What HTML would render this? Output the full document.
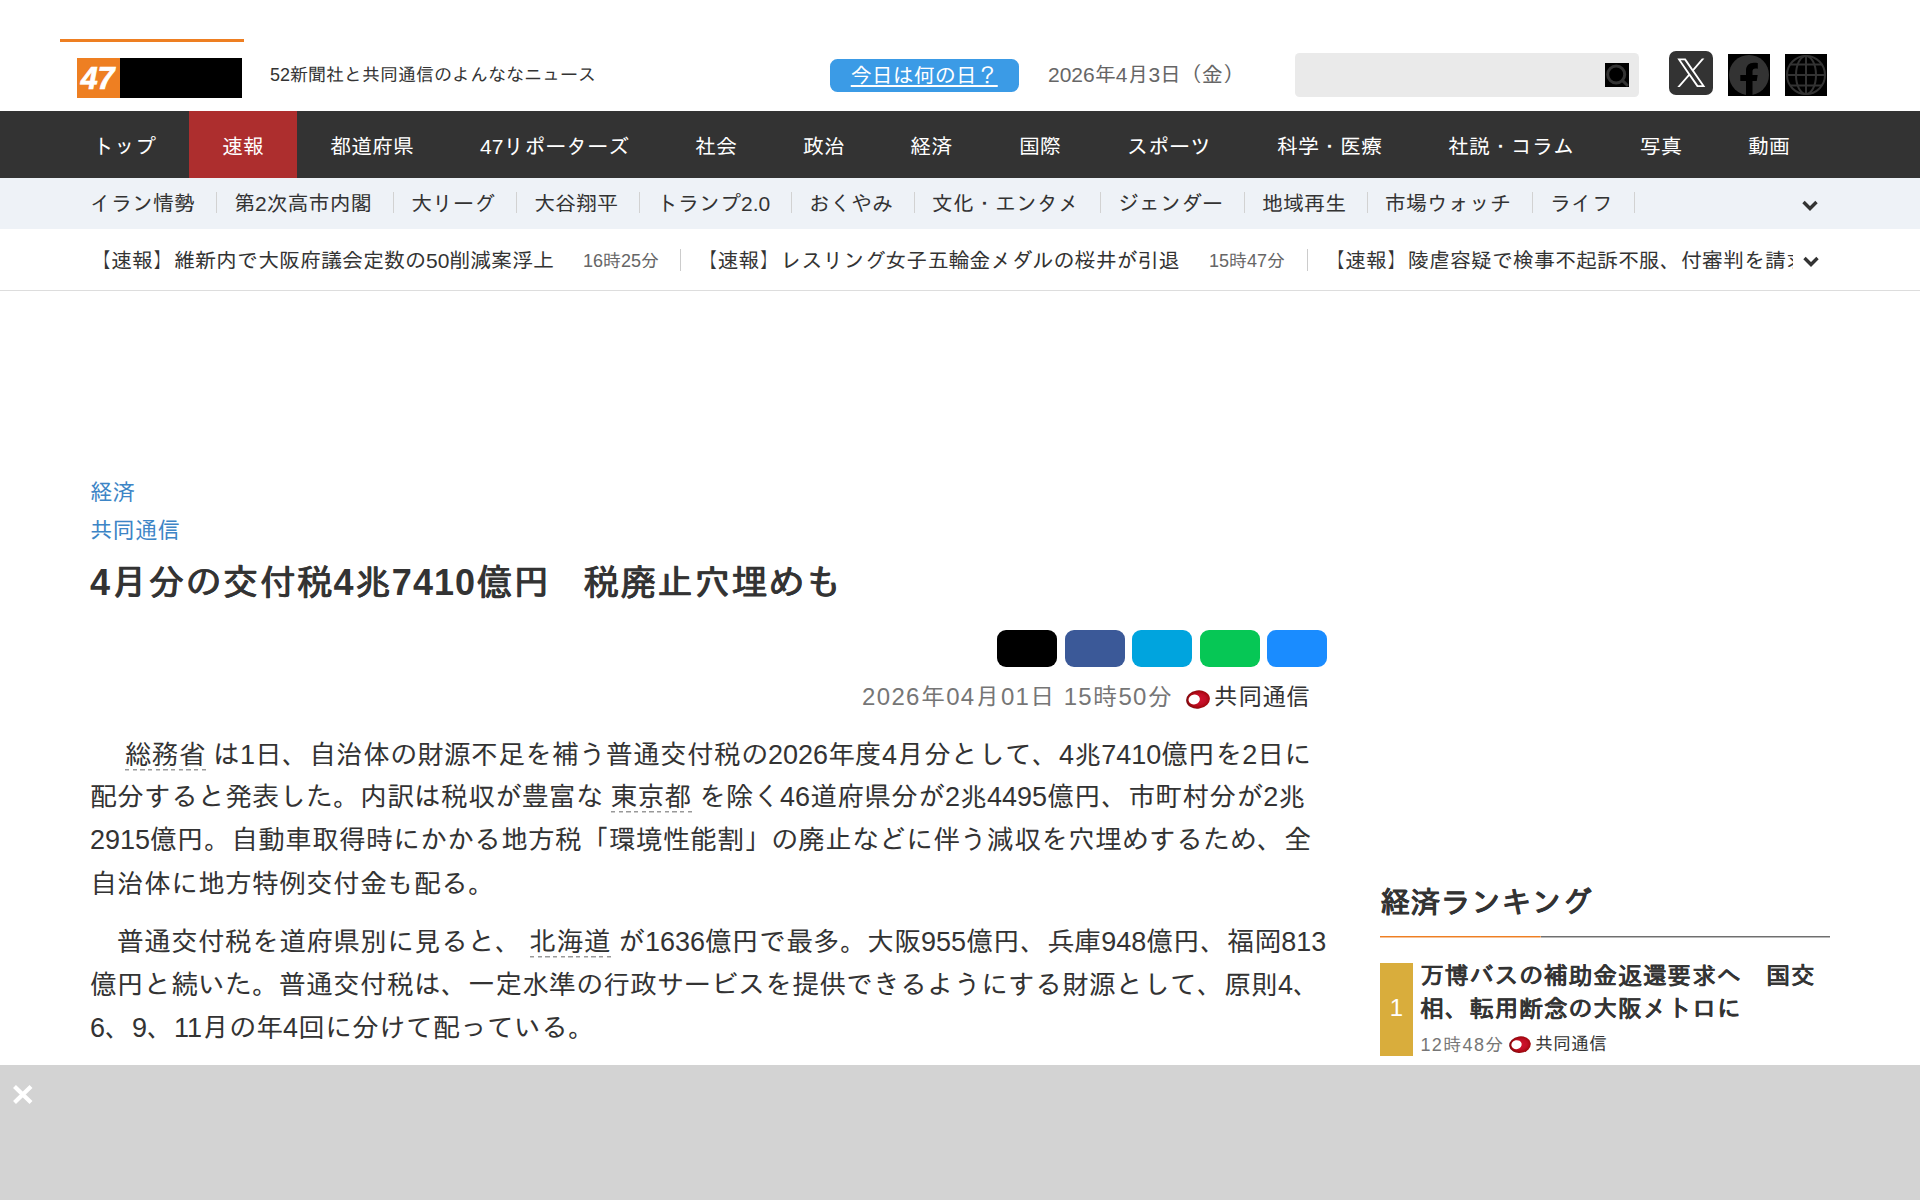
<!DOCTYPE html>
<html lang="ja">
<head>
<meta charset="utf-8">
<title>4月分の交付税4兆7410億円　税廃止穴埋めも</title>
<style>
*{box-sizing:border-box;margin:0;padding:0}
html,body{width:1920px;height:1200px;overflow:hidden;background:#fff}
body{font-family:"Liberation Sans","IPAGothic",sans-serif;color:#333;position:relative}
a{color:inherit;text-decoration:none}
.abs{position:absolute}

/* header */
#logoline{left:60px;top:39px;width:184px;height:3px;background:#ee7f22}
#logo{left:76.5px;top:57.6px;width:165px;height:40px;background:#000}
#logo .o{position:absolute;left:0;top:0;width:43.2px;height:40px;background:#ee7f22;color:#fff;font-weight:bold;font-style:italic;font-size:30.5px;line-height:40px;text-align:center;letter-spacing:0;text-indent:-1px;-webkit-text-stroke:.7px #fff}
#tagline{left:270px;top:63px;font-size:18px;line-height:24px;color:#333;white-space:nowrap}
#today{left:830px;top:58.5px;width:188.5px;height:33px;background:#3b9be6;border-radius:7.5px;color:#fff;font-size:21px;line-height:33px;text-align:center;white-space:nowrap}
#today span{text-decoration:underline}
#date{left:1048px;top:60.5px;font-size:21px;line-height:28px;color:#666;white-space:nowrap}
#search{left:1294.5px;top:52.5px;width:344.5px;height:44.5px;background:#eaeaea;border-radius:4.5px}
#sicon{left:1605px;top:63px;width:24px;height:24px;background:#000}
#xicon{left:1669px;top:51px;width:44px;height:44px;background:#333;border-radius:7px}
#fbicon{left:1728px;top:54px;width:42px;height:42px;background:#000}
#glicon{left:1785px;top:54px;width:42px;height:42px;background:#000}

/* nav */
#nav{left:0;top:111px;width:1920px;height:67.5px;background:#333}
#nav a{position:absolute;top:0;height:67px;line-height:71px;font-size:21px;color:#fff;white-space:nowrap}
#nav .act{background:#ad2e2e;left:188.8px;width:108.3px;height:67.5px}

#sub{left:0;top:178px;width:1920px;height:51px;background:#eef2f7}
#sub a{position:absolute;top:0;height:51px;line-height:52px;font-size:21px;color:#333;white-space:nowrap}
#sub i{position:absolute;top:13.5px;width:1px;height:21px;background:#d2d2d2}

#tick{left:0;top:229px;width:1920px;height:62px;background:#fff;border-bottom:1px solid #ddd}
#tick a{position:absolute;top:0;height:61px;line-height:63.5px;font-size:21px;color:#333;white-space:nowrap}
#tick em{position:absolute;top:0;height:61px;line-height:64px;font-size:18px;color:#666;font-style:normal;white-space:nowrap}
#tick i{position:absolute;top:20px;width:1px;height:22px;background:#ccc}

/* article */
.cat{left:90px;font-size:22.5px;line-height:30px;color:#3d85c6;white-space:nowrap}
#h1{left:90px;top:558.5px;font-size:36px;line-height:48px;font-weight:bold;color:#333;white-space:nowrap;letter-spacing:.03em}
.sh{top:629.8px;width:60px;height:37.5px;border-radius:9px}
#meta{left:862px;top:681px;font-size:24px;line-height:32px;color:#767676;white-space:nowrap;letter-spacing:1.35px}
#meta2{left:1214px;top:681px;font-size:24px;line-height:32px;color:#333;white-space:nowrap}
.kico{width:24px;height:17px}
#body p{left:90px;font-size:27px;line-height:43px;height:43px;color:#333;white-space:nowrap}
#body u{text-decoration:none;padding-bottom:1px;background:repeating-linear-gradient(90deg,#999 0,#999 4.4px,transparent 4.4px,transparent 7.67px) left bottom 1px/100% 1px no-repeat,repeating-linear-gradient(90deg,#ccc 0,#ccc 4.4px,transparent 4.4px,transparent 7.67px) left bottom/100% 1px no-repeat}

.fb{font-weight:normal !important;-webkit-text-stroke:.017em #333;text-shadow:.022em 0 0 #333}
.fb b{font-weight:bold;-webkit-text-stroke:0;text-shadow:none}
#rkh.fb{-webkit-text-stroke:.03em #333;text-shadow:.022em 0 0 #333}
#rkt.fb{-webkit-text-stroke:.033em #333;text-shadow:.016em 0 0 #333}
/* ranking */
#rkt{left:1380px;top:881px;font-size:30px;line-height:44px;font-weight:bold;color:#333;white-space:nowrap;letter-spacing:.3px}
#rkl{left:1380px;top:936px;width:450px;height:2px;background:linear-gradient(#6f6f6f,#6f6f6f) top/100% 1px no-repeat,linear-gradient(#b8b8b8,#b8b8b8) bottom/100% 1px no-repeat}
#rkl b{display:block;width:160.5px;height:2px;background:linear-gradient(#ee7f22,#ee7f22) top/100% 1px no-repeat,linear-gradient(#f7c196,#f7c196) bottom/100% 1px no-repeat #fff}
#rkn{left:1380px;top:963px;width:33px;height:93px;background:#d9ad3c;color:#fff;font-size:24px;line-height:89px;text-align:center}
#rkh{left:1420px;top:958.5px;font-size:24px;line-height:33px;font-weight:bold;color:#333;white-space:nowrap;letter-spacing:.03em}
#rkm{left:1420.5px;top:1032.5px;font-size:18px;line-height:24px;color:#767676;white-space:nowrap;letter-spacing:1.35px}

#ad{left:0;top:1065px;width:1920px;height:135px;background:#d3d3d3}
</style>
</head>
<body>
<!-- HEADER -->
<div class="abs" id="logoline"></div>
<div class="abs" id="logo"><div class="o">47</div></div>
<div class="abs" id="tagline">52新聞社と共同通信のよんななニュース</div>
<div class="abs" id="today"><span>今日は何の日？</span></div>
<div class="abs" id="date">2026年4月3日（金）</div>
<div class="abs" id="search"></div>
<div class="abs" id="sicon"><svg width="24" height="24" viewBox="0 0 24 24"><circle cx="11.2" cy="11.5" r="8.5" fill="none" stroke="#333" stroke-width="3"/><path d="M17.6 17.6L22 22" stroke="#333" stroke-width="3" stroke-linecap="round"/></svg></div>
<div class="abs" id="xicon"><svg width="44" height="44" viewBox="0 0 44 44"><g transform="translate(8.3,7.5) scale(0.02333)"><path fill="#fff" d="M714.163 519.284L1160.89 0H1055.03L667.137 450.887L357.328 0H0L468.492 681.821L0 1226.37H105.866L515.491 750.218L842.672 1226.37H1200L714.137 519.284H714.163ZM569.165 687.828L521.697 619.934L144.011 79.6944H306.615L611.412 515.685L658.88 583.579L1055.08 1150.3H892.476L569.165 687.854V687.828Z"/></g></svg></div>
<div class="abs" id="fbicon"><svg width="42" height="42" viewBox="0 0 42 42"><circle cx="21" cy="21" r="20" fill="#333"/><path fill="#000" d="M18 41.5V26.9H12.3V20.9H18V16.6C18 11.6 21 8.75 25.9 8.75C27.5 8.75 29 8.9 29.8 9.1V14.7C29.2 14.6 28.4 14.6 27.6 14.6C25.4 14.6 24.5 15.5 24.5 17.6V20.9H29.7L28.7 26.9H24.5V41.5Z"/></svg></div>
<div class="abs" id="glicon"><svg width="42" height="42" viewBox="0 0 42 42" fill="none" stroke="#333" stroke-width="2"><circle cx="21" cy="21" r="19"/><ellipse cx="21" cy="21" rx="10" ry="19"/><path d="M21 2V40M2 21H40M5.2 10.4H36.8M5.2 31.6H36.8"/></svg></div>

<!-- NAV -->
<nav class="abs" id="nav">
<a style="left:93px">トップ</a>
<a class="act"></a>
<a style="left:222px">速報</a>
<a style="left:330px">都道府県</a>
<a style="left:480px">47リポーターズ</a>
<a style="left:695px">社会</a>
<a style="left:803px">政治</a>
<a style="left:910px">経済</a>
<a style="left:1019px">国際</a>
<a style="left:1127px">スポーツ</a>
<a style="left:1277px">科学・医療</a>
<a style="left:1448px">社説・コラム</a>
<a style="left:1640px">写真</a>
<a style="left:1748px">動画</a>
</nav>

<div class="abs" id="sub">
<a style="left:90px">イラン情勢</a><i style="left:216px"></i>
<a style="left:234px">第2次高市内閣</a><i style="left:393px"></i>
<a style="left:411px">大リーグ</a><i style="left:516px"></i>
<a style="left:534px">大谷翔平</a><i style="left:639px"></i>
<a style="left:657px">トランプ2.0</a><i style="left:791px"></i>
<a style="left:809px">おくやみ</a><i style="left:914px"></i>
<a style="left:932px">文化・エンタメ</a><i style="left:1100px"></i>
<a style="left:1118px">ジェンダー</a><i style="left:1244px"></i>
<a style="left:1262px">地域再生</a><i style="left:1367px"></i>
<a style="left:1385px">市場ウォッチ</a><i style="left:1532px"></i>
<a style="left:1550px">ライフ</a><i style="left:1634px"></i>
</div>

<div class="abs" id="tick">
<a style="left:90px">【速報】維新内で大阪府議会定数の50削減案浮上</a>
<em style="left:583px">16時25分</em><i style="left:680px"></i>
<a style="left:696.5px">【速報】レスリング女子五輪金メダルの桜井が引退</a>
<em style="left:1209px">15時47分</em><i style="left:1307px"></i>
<a style="left:1324px;width:468.5px;overflow:hidden">【速報】陵虐容疑で検事不起訴不服、付審判を請求</a>
</div>

<svg class="abs" style="left:1801px;top:200px" width="18" height="12" viewBox="0 0 18 12"><path d="M2.5 2L9 8.5L15.5 2" fill="none" stroke="#333" stroke-width="3.4"/></svg>
<svg class="abs" style="left:1802px;top:256px" width="18" height="12" viewBox="0 0 18 12"><path d="M2.5 2L9 8.5L15.5 2" fill="none" stroke="#333" stroke-width="3.4"/></svg>
<!-- ARTICLE -->
<div class="abs cat" style="top:477.5px">経済</div>
<div class="abs cat" style="top:515.5px">共同通信</div>
<h1 class="abs fb" id="h1"><b>4</b>月分の交付税<b>4</b>兆<b>7410</b>億円<span style="margin-right:-4.6px">　</span>税廃止穴埋めも</h1>

<div class="abs sh" style="left:997.4px;background:#000"></div>
<div class="abs sh" style="left:1064.9px;background:#3b5998"></div>
<div class="abs sh" style="left:1132.4px;background:#00a4de"></div>
<div class="abs sh" style="left:1199.9px;background:#06c755"></div>
<div class="abs sh" style="left:1267.4px;background:#1a8cff"></div>

<div class="abs" id="meta">2026年04月01日 15時50分</div>
<svg class="abs" style="left:1186px;top:690px" width="24" height="19" viewBox="0 0 24 19"><defs><radialGradient id="kg1" cx="0.55" cy="0.5" r="0.56"><stop offset="0" stop-color="#d2142d"/><stop offset="0.5" stop-color="#c20f27"/><stop offset="0.8" stop-color="#a4080f"/><stop offset="1" stop-color="#6e0a12"/></radialGradient></defs><ellipse cx="12" cy="9.5" rx="11.9" ry="9.1" fill="url(#kg1)" transform="rotate(-8 12 9.5)"/><ellipse cx="8.2" cy="9.5" rx="5.7" ry="4.9" fill="#fff" transform="rotate(-12 8.2 9.5)"/></svg>
<div class="abs" id="meta2">共同通信</div>

<div id="body">
<p class="abs" style="top:734px">　 <u>総務省</u> は1日、自治体の財源不足を補う普通交付税の2026年度4月分として、4兆7410億円を2日に</p>
<p class="abs" style="top:776px">配分すると発表した。内訳は税収が豊富な <u>東京都</u> を除く46道府県分が2兆4495億円、市町村分が2兆</p>
<p class="abs" style="top:819px">2915億円。自動車取得時にかかる地方税「環境性能割」の廃止などに伴う減収を穴埋めするため、全</p>
<p class="abs" style="top:863px">自治体に地方特例交付金も配る。</p>
<p class="abs" style="top:921px">　普通交付税を道府県別に見ると、 <u>北海道</u> が1636億円で最多。大阪955億円、兵庫948億円、福岡813</p>
<p class="abs" style="top:964px">億円と続いた。普通交付税は、一定水準の行政サービスを提供できるようにする財源として、原則4、</p>
<p class="abs" style="top:1007px">6、9、11月の年4回に分けて配っている。</p>
</div>

<!-- RANKING -->
<h2 class="abs fb" id="rkt">経済ランキング</h2>
<div class="abs" id="rkl"><b></b></div>
<div class="abs" id="rkn">1</div>
<div class="abs fb" id="rkh">万博バスの補助金返還要求へ　国交<br>相、転用断念の大阪メトロに</div>
<div class="abs" id="rkm">12時48分</div>
<svg class="abs" style="left:1509.4px;top:1036px" width="22" height="17.3" viewBox="0 0 24 19"><defs><radialGradient id="kg2" cx="0.55" cy="0.5" r="0.56"><stop offset="0" stop-color="#d2142d"/><stop offset="0.5" stop-color="#c20f27"/><stop offset="0.8" stop-color="#a4080f"/><stop offset="1" stop-color="#6e0a12"/></radialGradient></defs><ellipse cx="12" cy="9.5" rx="11.9" ry="9.1" fill="url(#kg2)" transform="rotate(-8 12 9.5)"/><ellipse cx="8.2" cy="9.5" rx="5.7" ry="4.9" fill="#fff" transform="rotate(-12 8.2 9.5)"/></svg>
<div class="abs" id="rkm2" style="left:1535px;top:1032px;font-size:18px;line-height:24px;color:#333;white-space:nowrap">共同通信</div>

<!-- BOTTOM AD -->
<div class="abs" id="ad"><svg class="abs" style="left:11px;top:18px" width="24" height="24" viewBox="0 0 24 24"><path d="M3.5 3.5L20 19.5M20 3.5L3.5 19.5" stroke="#fff" stroke-width="4.2" fill="none"/></svg></div>
</body>
</html>
